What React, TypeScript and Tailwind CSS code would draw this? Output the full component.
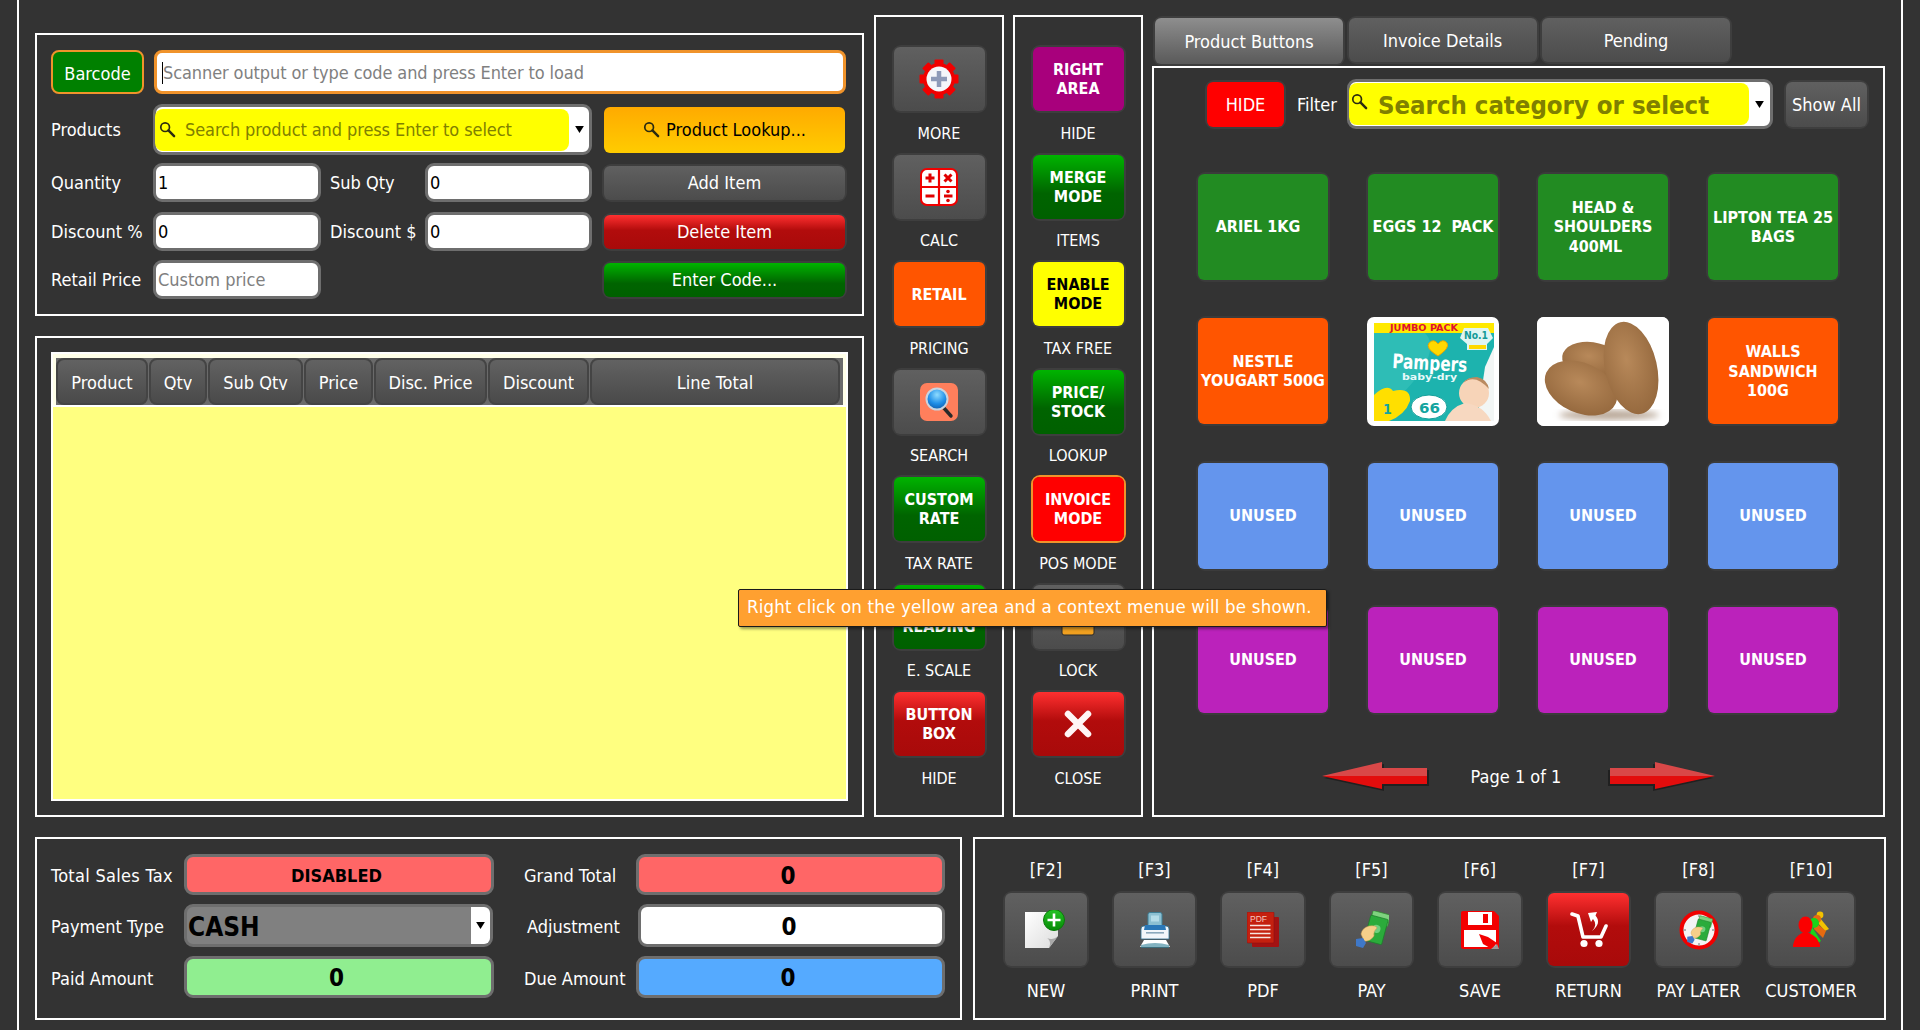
import React from "react";

const Mag = ({ className = "" }: { className?: string }) => (
  <svg viewBox="0 0 18 18" className={className}>
    <circle cx="6.5" cy="6.5" r="4.6" fill="none" stroke="#2b2b10" strokeWidth="1.8" />
    <path d="M10 10 L16 16" stroke="#2b2b10" strokeWidth="2.6" strokeLinecap="round" />
  </svg>
);

const Tri = () => (
  <svg viewBox="0 0 10 8" className="w-[9px] h-[7px]">
    <path d="M0 0H10L5 8Z" fill="#000" />
  </svg>
);

const Ring = ({ className, inner, children, accent }: { className: string; inner: string; children: React.ReactNode; accent?: boolean }) => (
  <div className={`${className} shrink-0 rounded-[9px] border-2 ${accent ? "border-[#f0932b]" : "border-[#3e3e3e]"}`}>
    <div className={`${inner} w-full h-full rounded-[6px] flex items-center justify-center text-center`}>{children}</div>
  </div>
);

const gray = "bg-gradient-to-b from-[#606060] to-[#4c4c4c] text-white";
const red = "bg-[linear-gradient(#ff3030,#b20c0c_45%,#a80a0a)] text-white";
const green = "bg-[linear-gradient(#00b400,#006400_60%,#006000)] text-white";

const Field = ({ w, v, ph }: { w: string; v?: string; ph?: string }) => (
  <div className={`${w} h-full shrink-0 rounded-[9px] border-[3px] border-[#6e6e6e] bg-white px-[2px] flex items-center text-[18px] ${ph ? "text-[#808080]" : "text-black"}`}>
    {v ?? ph}
  </div>
);

/* ---------- icons ---------- */
const Gear = () => (
  <svg viewBox="0 0 40 40" className="w-[40px] h-[40px]">
    <g fill="#f00000">
      <circle cx="20" cy="20" r="16" />
      {[0, 45, 90, 135, 180, 225, 270, 315].map((a) => (
        <rect key={a} x="15.5" y="0.5" width="9" height="8" rx="1" transform={`rotate(${a} 20 20)`} />
      ))}
    </g>
    <circle cx="20" cy="20" r="12.5" fill="#f4f6fa" />
    <path d="M20 12V28M12 20H28" stroke="#8d9ab8" strokeWidth="4.5" />
  </svg>
);
const Calc = () => (
  <svg viewBox="0 0 38 38" className="w-[38px] h-[38px]">
    <rect x="1" y="1" width="36" height="36" rx="6" fill="#fff" stroke="#f00000" strokeWidth="2" />
    <path d="M19 1V37M1 19H37" stroke="#f00000" strokeWidth="2.2" />
    <path d="M10 5.5V14.5M5.5 10H14.5" stroke="#e00000" strokeWidth="3" />
    <path d="M24.5 6.5L31.5 13.5M31.5 6.5L24.5 13.5" stroke="#e00000" strokeWidth="3" />
    <path d="M5.5 28H14.5M24 28H32.5" stroke="#e00000" strokeWidth="3" />
    <circle cx="28" cy="23.5" r="1.8" fill="#e00000" />
    <circle cx="28" cy="32.5" r="1.8" fill="#e00000" />
  </svg>
);
const SearchBig = () => (
  <svg viewBox="0 0 38 38" className="w-[38px] h-[38px]">
    <defs>
      <radialGradient id="lens" cx="0.5" cy="0.3" r="0.7">
        <stop offset="0" stopColor="#8fdcff" />
        <stop offset="0.6" stopColor="#1f8fe8" />
        <stop offset="1" stopColor="#0e5fb0" />
      </radialGradient>
    </defs>
    <rect x="0" y="0" width="38" height="38" rx="7" fill="#ff7f5c" />
    <path d="M23 24L31 33" stroke="#2a2a2a" strokeWidth="3.4" strokeLinecap="round" />
    <circle cx="17" cy="16" r="10.5" fill="url(#lens)" stroke="#c8d4e0" strokeWidth="2" />
  </svg>
);
const Lock = () => (
  <svg viewBox="0 0 34 38" className="w-[34px] h-[38px]">
    <path d="M8 18V10a9 9 0 0 1 18 0V18" fill="none" stroke="#ccc" strokeWidth="4" />
    <rect x="1" y="17" width="32" height="20" rx="2" fill="#f0a020" stroke="#2a2a2a" />
  </svg>
);
const X = () => (
  <svg viewBox="0 0 28 28" className="w-[28px] h-[28px]">
    <path d="M4 4L24 24M24 4L4 24" stroke="#fff5f5" strokeWidth="6.5" strokeLinecap="round" />
  </svg>
);
const NewI = () => (
  <svg viewBox="0 0 42 40" className="w-[42px] h-[40px]">
    <defs>
      <linearGradient id="gb" x1="0" y1="0" x2="0" y2="1">
        <stop offset="0" stopColor="#25c425" />
        <stop offset="1" stopColor="#068a06" />
      </linearGradient>
      <linearGradient id="pg" x1="0" y1="0" x2="1" y2="1">
        <stop offset="0" stopColor="#fff" />
        <stop offset="1" stopColor="#dcdcdc" />
      </linearGradient>
    </defs>
    <path d="M0 2H33V26L24 38H0Z" fill="url(#pg)" />
    <path d="M33 26L24 38C26 33 25 30 22 28C26 30 30 29 33 26Z" fill="#a8a8a8" />
    <circle cx="29" cy="10" r="10.5" fill="url(#gb)" stroke="#0a7a0a" />
    <path d="M29 3.5V16.5M22.5 10H35.5" stroke="#fff" strokeWidth="2.6" />
  </svg>
);
const PrintI = () => (
  <svg viewBox="0 0 30 36" className="w-[30px] h-[36px]">
    <rect x="8" y="0.5" width="14" height="14" rx="2" fill="#8cc0d2" stroke="#3f7f96" />
    <rect x="11" y="3.5" width="8" height="6" fill="#b4dce8" />
    <path d="M1 17Q1 14 4 14H26Q29 14 29 17V27H1Z" fill="#f2f6fa" stroke="#2f6f8f" strokeWidth="0.8" />
    <path d="M5 13H25L26 18H4Z" fill="#2a78b8" />
    <rect x="6" y="20" width="18" height="1.6" fill="#8aa8bc" />
    <path d="M4 28H26L30 35H0Z" fill="#fff" />
    <path d="M1 33Q15 29 29 33V36H1Z" fill="#2f7f96" opacity="0.6" />
  </svg>
);
const PdfI = () => (
  <svg viewBox="0 0 32 35" className="w-[32px] h-[35px]">
    <rect x="5" y="5" width="27" height="30" rx="1" fill="#a31212" />
    <rect x="0" y="0" width="27" height="31" rx="1" fill="#c4200f" stroke="#8e1010" strokeWidth="0.6" />
    <text x="3" y="10" fontSize="8.5" fontFamily="Liberation Sans, sans-serif" fill="#f5c8c0">PDF</text>
    <path d="M3 13.5H23.5M3 17.5H23.5M3 21.5H23.5M3 25.5H23.5" stroke="#f6e4e0" strokeWidth="1.5" />
  </svg>
);
const PayArt = () => (
  <>
    <g transform="rotate(15 22 16)">
      <rect x="14" y="1" width="18" height="12" rx="1" fill="#7fd27f" stroke="#2f8f2f" strokeWidth="0.7" />
      <rect x="13" y="6" width="18" height="26" rx="1" fill="#2bab3b" stroke="#1a7f28" strokeWidth="0.7" />
      <circle cx="22" cy="18" r="4" fill="#6fd07f" />
    </g>
    <path d="M6 23Q7 17 14 15Q21 14 22 17Q18 20 19 25Q15 31 9 30Z" fill="#f6cf8a" stroke="#c89a50" strokeWidth="0.5" />
    <path d="M1 28L8 27L11 32L8 37L1 35Z" fill="#3f78c8" />
  </>
);
const PayI = () => (
  <svg viewBox="0 0 34 37" className="w-[34px] h-[37px]">
    <PayArt />
  </svg>
);
const SaveI = () => (
  <svg viewBox="0 0 38 38" className="w-[38px] h-[38px]">
    <path d="M2 0H33L38 5V38H2Q0 38 0 36V2Q0 0 2 0Z" fill="#f30000" />
    <rect x="7" y="1" width="24" height="13" fill="#fff" />
    <rect x="22" y="3" width="5" height="9" fill="#f30000" />
    <rect x="3" y="19" width="32" height="17" fill="#fff" />
    <path d="M18 23L27 26L36 32L31 38L22 33Z" fill="#f30000" />
    <path d="M36 33L38 38H30Z" fill="#999" />
  </svg>
);
const ReturnI = () => (
  <svg viewBox="0 0 38 37" className="w-[38px] h-[37px]">
    <path d="M2 3L8 5L13 26H31L36 15" fill="none" stroke="#fff" strokeWidth="3.6" strokeLinecap="round" strokeLinejoin="round" />
    <circle cx="14" cy="32.5" r="3.6" fill="#fff" />
    <circle cx="29" cy="32.5" r="3.6" fill="#fff" />
    <path d="M22 20Q28 14 23 8L21 11L18 2L27 1L25.5 4.5Q32 12 22 20Z" fill="#fff" />
  </svg>
);
const LaterI = () => (
  <svg viewBox="0 0 40 40" className="w-[40px] h-[40px]">
    <circle cx="20" cy="20" r="17.5" fill="#f4f4f4" stroke="#f00000" strokeWidth="4" />
    <path d="M20 4V7M20 33V36M4 20H7M33 20H36" stroke="#999" strokeWidth="1.4" />
    <g transform="translate(7.5 6) scale(0.74)">
      <PayArt />
    </g>
  </svg>
);
const CustI = () => (
  <svg viewBox="0 0 36 37" className="w-[36px] h-[37px]">
    <g fill="#f2c200">
      <circle cx="27" cy="4" r="3.4" />
      <path d="M27 7L36 18L32 20L24 11Z" />
    </g>
    <g fill="#e66a10">
      <circle cx="24" cy="8" r="4" />
      <path d="M22 11L33 20L30 27L21 18Z" />
    </g>
    <g fill="#19d419">
      <circle cx="21" cy="12" r="5" />
      <path d="M19 16L28 30L25 32L17 24Z" />
    </g>
    <g fill="#fa0000">
      <ellipse cx="12.5" cy="14" rx="7" ry="8.5" />
      <path d="M9 22H16Q24 25 27 34V36H0V34Q2 25 9 22Z" />
    </g>
  </svg>
);
const Arrow = ({ flip }: { flip?: boolean }) => (
  <svg viewBox="0 0 108 30" className={`w-[108px] h-[30px] ${flip ? "-scale-x-100" : ""}`}>
    <path d="M2 16L62 2V8H107V24H62V29Z" fill="#111" opacity="0.55" />
    <path d="M0 14L60 27V22H105V14Z" fill="#e30d0d" />
    <path d="M0 14L60 0V6H105V14Z" fill="#d94848" />
  </svg>
);

const fd = "DejaVu Sans, sans-serif";
const Pampers = () => (
  <svg viewBox="0 0 132 109" className="w-full h-full">
    <rect x="7" y="6" width="120" height="98" fill="#1db3ae" />
    <path d="M118 50L127 30V104H110Z" fill="#f2f6f5" />
    <path d="M7 16H58Q72 30 50 60Q30 86 7 96Z" fill="#3cc4be" opacity="0.55" />
    <rect x="7" y="6" width="120" height="10" fill="#ffe900" />
    <text x="23" y="14" fontSize="8" fontWeight="700" fill="#e01030" fontFamily={fd} textLength="68" lengthAdjust="spacingAndGlyphs">JUMBO PACK</text>
    <path d="M97 11H121L126 21L120 27V33H100V27L93 21Z" fill="#dff5f2" />
    <text x="97" y="22" fontSize="10" fontWeight="700" fill="#139a98" fontFamily={fd} textLength="24" lengthAdjust="spacingAndGlyphs">No.1</text>
    <rect x="102" y="28" width="17" height="4" fill="#ffd900" />
    <path d="M71 39Q58 31 62 26Q67 21 71 27Q76 21 80 26Q83 31 71 39Z" fill="#ffd800" stroke="#e8a800" />
    <text x="25" y="51" fontSize="20" fontWeight="700" fill="#fff" fontFamily={fd} transform="rotate(3 25 51)" textLength="75" lengthAdjust="spacingAndGlyphs">Pampers</text>
    <text x="35" y="63" fontSize="9.5" fontWeight="600" fill="#e8fafa" fontFamily={fd} textLength="55" lengthAdjust="spacingAndGlyphs">baby-dry</text>
    <circle cx="107" cy="76" r="15" fill="#f7d4b8" />
    <path d="M96 66Q108 56 122 72Q120 62 110 60Q100 60 96 66Z" fill="#b98a60" />
    <path d="M78 104Q84 90 98 86Q116 88 124 104Z" fill="#f7d8c0" />
    <path d="M7 78Q20 66 26 74Q44 70 43 84Q38 98 22 104H7Z" fill="#ffdf00" />
    <text x="16" y="97" fontSize="14" fontWeight="700" fill="#14a49f" fontFamily={fd}>1</text>
    <ellipse cx="62" cy="90" rx="18" ry="12" fill="#fff" stroke="#159f9a" />
    <text x="52" y="96" fontSize="14" fontWeight="700" fill="#14a49f" fontFamily={fd} textLength="21" lengthAdjust="spacingAndGlyphs">66</text>
  </svg>
);
const Potato = () => (
  <svg viewBox="0 0 132 109" className="w-full h-full">
    <defs>
      <radialGradient id="pt" cx="0.45" cy="0.4" r="0.75">
        <stop offset="0" stopColor="#b8895a" />
        <stop offset="1" stopColor="#8e6238" />
      </radialGradient>
      <filter id="bl"><feGaussianBlur stdDeviation="3" /></filter>
    </defs>
    <rect width="132" height="109" fill="#fff" />
    <ellipse cx="72" cy="98" rx="50" ry="5" fill="#b9a898" filter="url(#bl)" />
    <ellipse cx="54" cy="43" rx="29" ry="18" transform="rotate(8 54 43)" fill="url(#pt)" />
    <ellipse cx="44" cy="71" rx="38" ry="25" transform="rotate(24 44 71)" fill="url(#pt)" />
    <ellipse cx="94" cy="51" rx="26" ry="47" transform="rotate(-13 94 51)" fill="url(#pt)" />
  </svg>
);

/* ---------- side column ---------- */
const sideA = [
  { l: "MORE", c: gray, i: <Gear /> },
  { l: "CALC", c: gray, i: <Calc /> },
  { l: "PRICING", c: "bg-[#ff5500] text-white", t: "RETAIL" },
  { l: "SEARCH", c: gray, i: <SearchBig /> },
  { l: "TAX RATE", c: green, t: "CUSTOM\nRATE" },
  { l: "E. SCALE", c: green, t: "SCALE\nREADING" },
  { l: "HIDE", c: red, t: "BUTTON\nBOX" },
];
const sideB = [
  { l: "HIDE", c: "bg-[#a8007c] text-white", t: "RIGHT\nAREA" },
  { l: "ITEMS", c: green, t: "MERGE\nMODE" },
  { l: "TAX FREE", c: "bg-[#ffff00] text-black", t: "ENABLE\nMODE" },
  { l: "LOOKUP", c: green, t: "PRICE/\nSTOCK" },
  { l: "POS MODE", c: "bg-[#ff0000] text-white", t: "INVOICE\nMODE", a: true },
  { l: "LOCK", c: gray, i: <Lock /> },
  { l: "CLOSE", c: red, i: <X /> },
];

type Side = { l: string; c: string; t?: string; i?: React.ReactNode; a?: boolean };
const SideCol = ({ items, w, ml }: { items: Side[]; w: string; ml: string }) => (
  <div className={`${w} ${ml} shrink-0 h-full border-2 border-white pt-[28px] flex flex-col items-center`}>
    {items.map((it) => (
      <div key={it.l + (it.t ?? "")} className="flex flex-col items-center w-[95px]">
        <Ring className="w-[95px] h-[68px]" inner={it.c} accent={it.a}>
          {it.t ? <span className="whitespace-pre-line font-bold text-[16px] leading-[19px]">{it.t}</span> : it.i}
        </Ring>
        <div className="h-[39.5px] pt-[2px] flex items-center text-[16px] text-white whitespace-nowrap">{it.l}</div>
      </div>
    ))}
  </div>
);

const tiles = [
  ["ARIEL 1KG\u00a0\u00a0", "g"], ["EGGS 12  PACK", "g"], ["HEAD &\nSHOULDERS\n400ML\u00a0\u00a0\u00a0", "g"], ["LIPTON TEA 25\nBAGS", "g"],
  ["NESTLE\nYOUGART 500G", "o"], ["@p", ""], ["@q", ""], ["WALLS\nSANDWICH\n100G\u00a0\u00a0", "o"],
  ["UNUSED", "b"], ["UNUSED", "b"], ["UNUSED", "b"], ["UNUSED", "b"],
  ["UNUSED", "m"], ["UNUSED", "m"], ["UNUSED", "m"], ["UNUSED", "m"],
];
const tileBg: Record<string, string> = { g: "bg-[#228b22]", o: "bg-[#ff5500]", b: "bg-[#6495ed]", m: "bg-[#bb22bb]" };

const Tile = ({ t, k }: { t: string; k: string }) => {
  if (t === "@p" || t === "@q")
    return (
      <div className="w-[132px] h-[109px] -m-[1.5px] rounded-[7px] overflow-hidden bg-white">
        {t === "@p" ? <Pampers /> : <Potato />}
      </div>
    );
  return (
    <div className="w-[134px] h-[110px] -m-[2px] rounded-[9px] border-2 border-[#3b3b3b]">
      <div className={`${tileBg[k]} w-full h-full rounded-[6px] flex items-center justify-center text-center text-white font-bold text-[16px] leading-[19.5px] whitespace-pre-wrap`}>{t}</div>
    </div>
  );
};

const fn = [
  ["[F2]", "NEW", "w-[86px]", gray, <NewI />],
  ["[F3]", "PRINT", "w-[85px]", gray, <PrintI />],
  ["[F4]", "PDF", "w-[86px]", gray, <PdfI />],
  ["[F5]", "PAY", "w-[85px]", gray, <PayI />],
  ["[F6]", "SAVE", "w-[86px]", gray, <SaveI />],
  ["[F7]", "RETURN", "w-[85px]", red, <ReturnI />],
  ["[F8]", "PAY LATER", "w-[89px]", gray, <LaterI />],
  ["[F10]", "CUSTOMER", "w-[90px]", gray, <CustI />],
] as const;

const heads: [string, string][] = [
  ["Product", "w-[92px]"], ["Qty", "w-[58px]"], ["Sub Qty", "w-[95px]"], ["Price", "w-[69px]"],
  ["Disc. Price", "w-[113px]"], ["Discount", "w-[101px]"], ["Line Total", "w-[250px]"],
];

const Amount = ({ bg, children, cls = "" }: { bg: string; children: React.ReactNode; cls?: string }) => (
  <div className={`${bg} ${cls} w-full h-full pt-[2px] pr-[5px] rounded-[9px] border-[3px] border-[#6e6e6e] flex items-center justify-center text-black font-bold text-[24px]`}>{children}</div>
);

export default function App() {
  return (
    <div className="relative w-[1920px] h-[1030px] overflow-hidden bg-[#333333] pl-[17px] [font-family:'DejaVu_Sans',sans-serif] font-stretch-condensed text-white">
      <div className="w-[1886px] h-full border-x-2 border-white pl-[16px] pt-[15px]">
        {/* upper area */}
        <div className="flex h-[802px]">
          <div className="w-[829px] shrink-0 pt-[18px] flex flex-col gap-[20px]">
            {/* entry form */}
            <div className="h-[283px] border-2 border-white pl-[14px] pt-[15px] text-[18px]">
              <div className="flex h-[44px]">
                <div className="w-[93px] pt-[2px] rounded-[8px] border-[2px] border-[#f0932b] bg-[#008000] flex items-center justify-center">Barcode</div>
                <div className="ml-[10px] w-[692px] pt-[2px] rounded-[8px] border-[3px] border-[#f0932b] bg-white flex items-center pl-[5px] text-[#808080]">
                  <span className="border-l border-black leading-[22px] tracking-[-0.1px]">Scanner output or type code and press Enter to load</span>
                </div>
              </div>
              <div className="flex h-[51px] mt-[10px] items-center">
                <div className="w-[102px]">Products</div>
                <div className="w-[439px] h-full rounded-[9px] border-[3px] border-[#6e6e6e] bg-white flex items-center">
                  <div className="w-[414px] h-[42px] -ml-px rounded-[8px] bg-[#ffff00] text-[#808000] flex items-center pl-[4px] gap-[9px]">
                    <Mag className="w-[17px] h-[17px] shrink-0" />
                    <span className="tracking-[-0.09px]">Search product and press Enter to select</span>
                  </div>
                  <div className="flex-1 flex justify-center"><Tri /></div>
                </div>
                <div className="ml-[12px] w-[241px] h-[46px] rounded-[6px] bg-gradient-to-b from-[#ffaa00] to-[#ffcc00] text-black flex items-center justify-center gap-[6px]">
                  <Mag className="w-[17px] h-[17px]" />
                  <span>Product Lookup...</span>
                </div>
              </div>
              <div className="flex h-[39px] mt-[8px] items-center">
                <div className="w-[102px]">Quantity</div>
                <Field w="w-[168px]" v="1" />
                <div className="w-[104px] pl-[9px]">Sub Qty</div>
                <Field w="w-[167px]" v="0" />
                <Ring className="ml-[10px] w-[245px] h-[38px]" inner={gray}>Add Item</Ring>
              </div>
              <div className="flex h-[39px] mt-[10px] items-center">
                <div className="w-[102px]">Discount %</div>
                <Field w="w-[168px]" v="0" />
                <div className="w-[104px] pl-[9px]">Discount $</div>
                <Field w="w-[167px]" v="0" />
                <Ring className="ml-[10px] w-[245px] h-[38px]" inner={red}>Delete Item</Ring>
              </div>
              <div className="flex h-[39px] mt-[9px] items-center">
                <div className="w-[102px]">Retail Price</div>
                <Field w="w-[168px]" ph="Custom price" />
                <div className="w-[271px]" />
                <Ring className="ml-[10px] w-[245px] h-[38px]" inner={green}>Enter Code...</Ring>
              </div>
            </div>
            {/* line items */}
            <div className="h-[481px] border-2 border-white pl-[14px] pt-[14px]">
              <div className="w-[797px] h-[449px] bg-white p-[2px] flex flex-col">
                <div className="bg-[#ffffe8] pt-[4px] px-[3px]">
                  <div className="h-[47px] bg-[#6a6a6a] flex gap-px">
                    {heads.map(([h, w]) => (
                      <div key={h} className={`${w} shrink-0 h-full rounded-[8px] border-2 border-[#444444] bg-gradient-to-b from-[#626262] to-[#4a4a4a] flex items-center justify-center text-[18px]`}>
                        <span className="h-[17px] leading-[20px] overflow-hidden whitespace-nowrap">{h}</span>
                      </div>
                    ))}
                  </div>
                </div>
                <div className="h-[2px] bg-white" />
                <div className="flex-1 bg-[#ffff80]" />
              </div>
            </div>
          </div>
          <SideCol items={sideA} w="w-[130px]" ml="ml-[10px]" />
          <SideCol items={sideB} w="w-[130px]" ml="ml-[9px]" />
          {/* products */}
          <div className="ml-[9px] w-[733px] shrink-0 h-full flex flex-col">
            <div className="h-[51px] flex items-start gap-[1.5px] pl-[1px] pt-[1px] text-[18px]">
              <Ring className="w-[192px] h-[50px]" inner="bg-gradient-to-b from-[#8e8e8e] to-[#5a5a5a] text-white">Product Buttons</Ring>
              <Ring className="w-[192px] h-[48px]" inner={gray}>Invoice Details</Ring>
              <Ring className="w-[192px] h-[48px]" inner={gray}>Pending</Ring>
            </div>
            <div className="flex-1 border-2 border-white pl-[44px]">
              <div className="flex items-center h-[50px] mt-[11px] text-[18px]">
                <Ring className="ml-[7px] w-[81px] h-[49px]" inner="bg-[#ff0000] text-white">HIDE</Ring>
                <div className="ml-[11px] w-[50px]">Filter</div>
                <div className="w-[426px] h-full rounded-[9px] border-[3px] border-[#6e6e6e] bg-white flex items-center">
                  <div className="w-[400px] h-[42px] pt-[2px] -ml-px rounded-[8px] bg-[#ffff00] text-[#808000] font-bold text-[25.5px] flex items-center pl-[2px] gap-[10px]">
                    <Mag className="w-[17px] h-[17px] shrink-0 -mt-[8px]" />
                    <span className="whitespace-nowrap">Search category or select</span>
                  </div>
                  <div className="flex-1 flex justify-center"><Tri /></div>
                </div>
                <Ring className="ml-[11px] w-[85px] h-[49px]" inner={gray}>Show All</Ring>
              </div>
              <div className="mt-[45px] grid grid-cols-[130px_130px_130px_130px] auto-rows-[106px] gap-x-[40px] gap-y-[38.3px]">
                {tiles.map(([t, k], i) => <Tile key={i} t={t} k={k} />)}
              </div>
              <div className="ml-[124px] mt-[49px] flex items-center text-[18px]">
                <Arrow />
                <div className="w-[177px] pr-[5px] text-center">Page 1 of 1</div>
                <Arrow flip />
              </div>
            </div>
          </div>
        </div>
        {/* lower area */}
        <div className="flex gap-[11px] mt-[20px] h-[183px]">
          <div className="w-[927px] shrink-0 border-2 border-white pl-[14px] pt-[15px] text-[18px]">
            <div className="grid grid-cols-[133px_310px_30px_112px_309px] grid-rows-[41px_43px_42px] gap-y-[9px] items-center">
              <div className="pt-[2px] tracking-[0.3px] whitespace-nowrap">Total Sales Tax</div>
              <Amount bg="bg-[#ff6666]" cls="!text-[18px]">DISABLED</Amount>
              <div />
              <div className="pt-[2px]">Grand Total</div>
              <Amount bg="bg-[#ff6666]">0</Amount>

              <div className="pt-[2px]">Payment Type</div>
              <div className="w-[309px] h-full rounded-[9px] border-[3px] border-[#6e6e6e] bg-[#808080] flex items-center overflow-hidden">
                <div className="flex-1 pt-[3px] pl-[1px] text-black font-bold text-[26px]">CASH</div>
                <div className="w-[19px] h-full bg-white flex items-center justify-center"><Tri /></div>
              </div>
              <div />
              <div className="pl-[3px] pt-[2px]">Adjustment</div>
              <Amount bg="bg-white" cls="ml-[2px] !w-[307px]">0</Amount>

              <div className="pt-[2px]">Paid Amount</div>
              <Amount bg="bg-[#90ee90]">0</Amount>
              <div />
              <div className="pt-[2px]">Due Amount</div>
              <Amount bg="bg-[#55aaff]">0</Amount>
            </div>
          </div>
          <div className="w-[913px] shrink-0 border-2 border-white pl-[28px] pt-[19px] flex gap-[23px] text-[18px]">
            {fn.map(([k, l, w, c, i]) => (
              <div key={k} className={`${w} shrink-0 flex flex-col items-center`}>
                <div className="h-[33px] leading-[24px]">{k}</div>
                <Ring className="w-full h-[77px]" inner={c}>{i}</Ring>
                <div className="h-[44px] flex items-center whitespace-nowrap">{l}</div>
              </div>
            ))}
          </div>
        </div>
      </div>
      {/* tooltip */}
      <div className="absolute left-[738px] top-[589px] w-[589px] h-[38px] pb-[2px] rounded-[2px] border border-[#1a1a1a] bg-[#ffa030] text-white text-[18.5px] tracking-[0.2px] flex items-center pl-[8px] whitespace-nowrap shadow-[2px_2px_3px_rgba(0,0,0,0.4)]">
        <span>Right click on the yellow area and a context menue will be shown.</span>
      </div>
    </div>
  );
}
